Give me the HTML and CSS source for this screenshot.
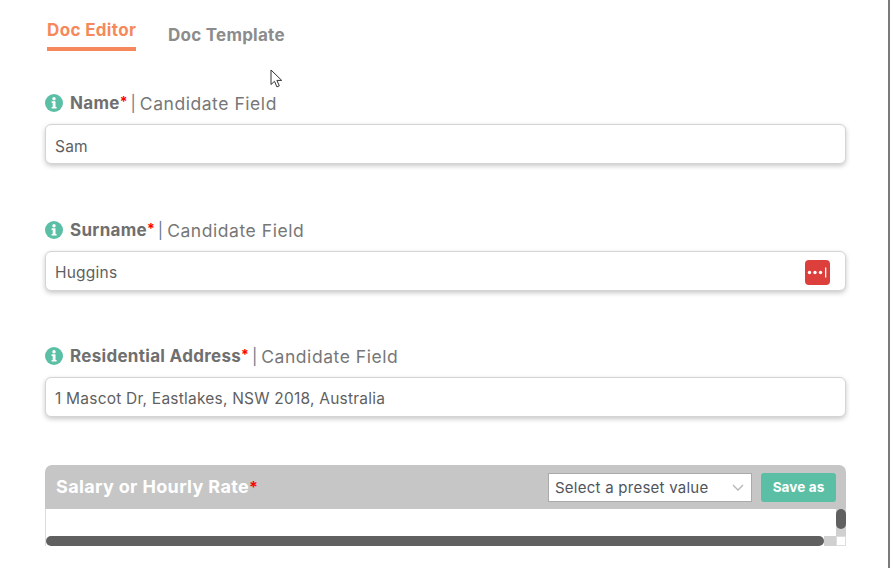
FILE: index.html
```html
<!DOCTYPE html>
<html lang="en">
<head>
<meta charset="utf-8">
<title>Doc Editor</title>
<link rel="stylesheet" href="styles.css">
</head>
<body>
<div class="page">
  <nav class="tabs">
    <a class="tab tab-active">Doc Editor</a>
    <a class="tab">Doc Template</a>
  </nav>
  <section class="field">
    <div class="label"><svg class="info" viewBox="0 0 18 18"><circle cx="9" cy="9" r="9" fill="#5bbfa5"/><circle cx="9" cy="4.8" r="1.7" fill="#fff"/><path d="M6.6 7.3h3.9v5.7h1.1v1.6H6.6V13h1.1V8.9H6.6z" fill="#fff"/></svg><b>Name</b><i class="req">*</i><span class="sep">|</span><span>Candidate Field</span></div>
    <div class="input">Sam</div>
  </section>
  <section class="field">
    <div class="label"><svg class="info" viewBox="0 0 18 18"><circle cx="9" cy="9" r="9" fill="#5bbfa5"/><circle cx="9" cy="4.8" r="1.7" fill="#fff"/><path d="M6.6 7.3h3.9v5.7h1.1v1.6H6.6V13h1.1V8.9H6.6z" fill="#fff"/></svg><b>Surname</b><i class="req">*</i><span class="sep">|</span><span>Candidate Field</span></div>
    <div class="input">Huggins<svg class="lp" viewBox="0 0 25 25"><rect width="25" height="25" rx="4" fill="#dc3f3c"/><circle cx="4.5" cy="12.5" r="1.7" fill="#fff"/><circle cx="10" cy="12.5" r="1.7" fill="#fff"/><circle cx="15.5" cy="12.5" r="1.7" fill="#fff"/><rect x="20" y="7.5" width="1.3" height="10" fill="#fff"/></svg></div>
  </section>
  <section class="field">
    <div class="label"><svg class="info" viewBox="0 0 18 18"><circle cx="9" cy="9" r="9" fill="#5bbfa5"/><circle cx="9" cy="4.8" r="1.7" fill="#fff"/><path d="M6.6 7.3h3.9v5.7h1.1v1.6H6.6V13h1.1V8.9H6.6z" fill="#fff"/></svg><b>Residential Address</b><i class="req">*</i><span class="sep">|</span><span>Candidate Field</span></div>
    <div class="input">1 Mascot Dr, Eastlakes, NSW 2018, Australia</div>
  </section>
  <section class="panel">
    <header class="panel-head">
      <div class="panel-title">Salary or Hourly Rate<i class="req">*</i></div>
      <div class="select">Select a preset value<svg class="chev" viewBox="0 0 12 7"><path d="M1 1l5 5 5-5" fill="none" stroke="#b5b5b5" stroke-width="1.3"/></svg></div>
      <button class="save">Save as</button>
    </header>
    <div class="panel-body">
      <div class="body-main"><div class="vtrack"><div class="vthumb"></div></div></div>
      <div class="hbar"><div class="hthumb"></div><div class="htrack"></div><div class="corner"></div></div>
    </div>
  </section>
</div>
<svg class="cursor" viewBox="0 0 13 20"><path d="M1 1v14.5l3.5-3.2 2.4 5.6 2.4-1-2.4-5.5h4.8z" fill="#fff" stroke="#333" stroke-width="1"/></svg>
</body>
</html>
```

FILE: styles.css
```css
* { box-sizing: border-box; }
html, body { margin: 0; padding: 0; }
body {
  width: 890px;
  height: 568px;
  overflow: hidden;
  background: #fff;
  border-right: 2px solid #7b7b7b;
  font-family: Inter, "Open Sans", sans-serif;
  color: #6b6b6b;
  position: relative;
}
.page { width: 846px; padding-left: 45px; }
.tabs { display: flex; align-items: flex-start; gap: 32px; padding: 20px 0 0 2px; height: 91px; }
.tab { font-size: 17px; font-weight: 700; color: #8c8c8c; padding-top: 5px; letter-spacing: 0.25px; }
.tab-active { color: #f5895b; padding-top: 0; padding-bottom: 7px; border-bottom: 4px solid #f5895b; letter-spacing: 0.35px; width: 89px; white-space: nowrap; }
.field { height: 126px; }
.field:first-of-type { height: 127px; }
.label { display: flex; align-items: center; height: 24px; font-size: 17.5px; letter-spacing: 0.55px; color: #777; margin-bottom: 9px; }
.label b { color: #6f6f6f; font-weight: 700; font-size: 17px; margin-left: 7px; letter-spacing: 0.3px; }
.info { width: 18px; height: 18px; flex: none; }
.req { color: #f00; font-style: normal; font-weight: 700; font-size: 14px; align-self: flex-start; margin-top: 2px; letter-spacing: 0; }
.sep { margin: 0 4px 0 3px; color: #6b7c8c; letter-spacing: 0; font-size: 16px; }
.input {
  display: flex;
  align-items: center;
  justify-content: space-between;
  height: 40px;
  padding: 4px 15px 0 9px;
  font-size: 15.5px;
  letter-spacing: 0.22px;
  color: #5f5f5f;
  border: 1px solid #d4d4d4;
  border-radius: 6px;
  background: #fff;
  box-shadow: 0 2px 5px rgba(0,0,0,.22);
}
.field:nth-of-type(n+2) .input { padding-top: 2px; }
.lp { width: 25px; height: 25px; flex: none; }
.panel { margin-top: -5px; border-radius: 7px 7px 0 0; overflow: hidden; height: 81px; }
.panel-head { display: flex; align-items: center; height: 44px; background: #c6c6c6; padding: 0 10px 0 11px; }
.panel-title { flex: 1; font-size: 18px; font-weight: 700; color: #fff; letter-spacing: 0.35px; padding-bottom: 1px; }
.panel-title .req { font-size: 16px; }
.select {
  display: flex;
  align-items: center;
  justify-content: space-between;
  width: 204px;
  height: 29px;
  padding: 0 7px 0 6px;
  background: #fff;
  border: 1px solid #aaa;
  font-size: 15px;
  letter-spacing: 0.25px;
  color: #50555c;
}
.chev { width: 12px; height: 7px; }
.save {
  margin-left: 9px;
  width: 75px;
  height: 29px;
  border: 0;
  border-radius: 3px;
  background: #5bbfa5;
  color: #fff;
  font: 700 13.5px Inter, sans-serif;
  letter-spacing: 0.1px;
  padding: 0;
}
.panel-body { height: 37px; display: flex; flex-direction: column; border-left: 1px solid #ddd; }
.body-main { flex: 1; display: flex; justify-content: flex-end; }
.vtrack { width: 10px; background: #d0d0d0; }
.vthumb { width: 10px; height: 20px; border-radius: 5px; background: #606060; }
.hbar { display: flex; height: 10px; }
.hthumb { flex: 1; background: #606060; border-radius: 5px; }
.htrack { width: 12px; background: #d0d0d0; }
.corner { width: 10px; background: #fff; border: 1px solid #ddd; }
.cursor { position: absolute; left: 270px; top: 69px; width: 13px; height: 20px; }
```
